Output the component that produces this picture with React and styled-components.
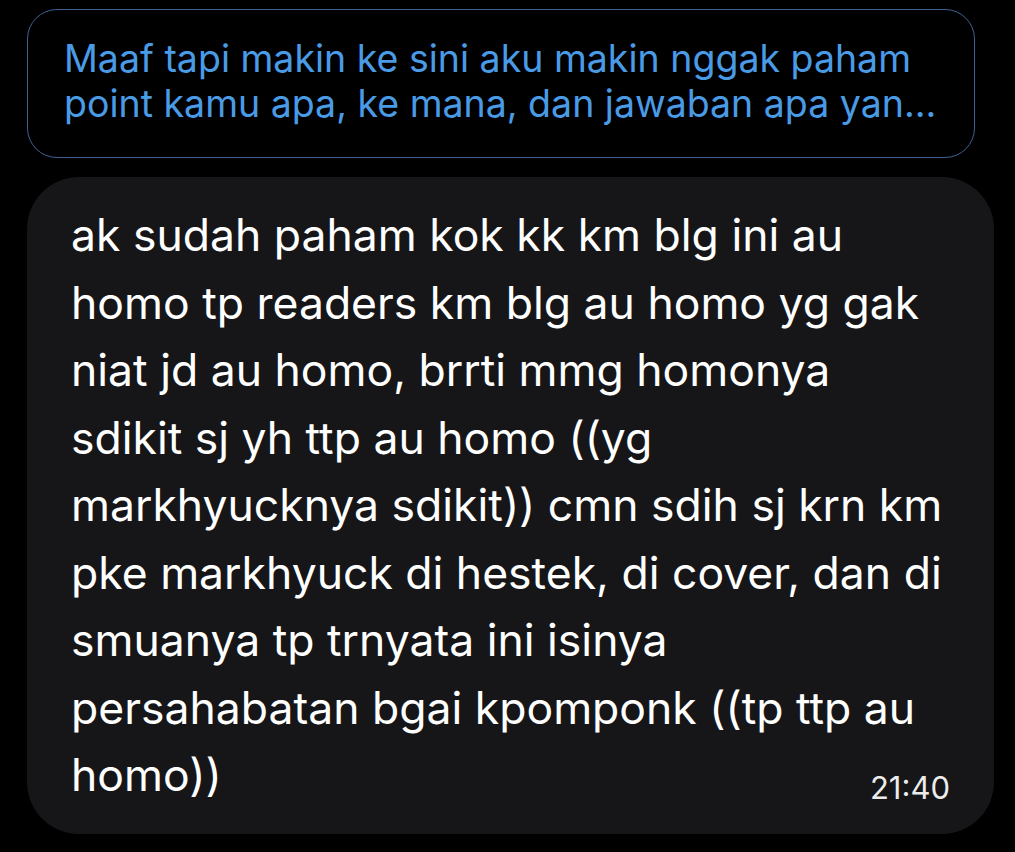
import React from "react";
import styled, { createGlobalStyle } from "styled-components";

const Global = createGlobalStyle`
  html, body { margin: 0; padding: 0; background: #000; }
  body { width: 1015px; height: 852px; overflow: hidden; font-family: Inter, "Noto Sans", sans-serif; }
`;

const Page = styled.div`
  display: flex;
  flex-direction: column;
  align-items: flex-start;
  gap: 19px;
  padding: 9px 21px 0 27px;
  background: #000;
  height: 852px;
  box-sizing: border-box;
`;

const Quote = styled.div`
  box-sizing: border-box;
  width: 948px;
  height: 149px;
  border: 1.5px solid #3f6190;
  border-radius: 30px;
  padding: 26px 0 0 36px;
  color: #4a9be6;
`;

const QuoteLine = styled.div`
  font-size: 37.5px;
  line-height: 45px;
  white-space: nowrap;
`;

const Bubble = styled.div`
  box-sizing: border-box;
  width: 967px;
  height: 657px;
  background: #161618;
  border-radius: 52px;
  padding: 25px 44px 0 44px;
  display: flex;
  flex-direction: column;
  color: #fff;
`;

const Line = styled.div`
  font-size: 44.5px;
  line-height: 67.5px;
  white-space: nowrap;
`;

const LastRow = styled.div`
  display: flex;
  justify-content: space-between;
  align-items: flex-start;
`;

const Time = styled.span`
  font-size: 31px;
  color: #ececec;
  margin-top: 27px;
  margin-right: 0px;
`;

const quoteLines = [
  "Maaf tapi makin ke sini aku makin nggak paham",
  "point kamu apa, ke mana, dan jawaban apa yan...",
];

const lines = [
  "ak sudah paham kok kk km blg ini au",
  "homo tp readers km blg au homo yg gak",
  "niat jd au homo, brrti mmg homonya",
  "sdikit sj yh ttp au homo ((yg",
  "markhyucknya sdikit)) cmn sdih sj krn km",
  "pke markhyuck di hestek, di cover, dan di",
  "smuanya tp trnyata ini isinya",
  "persahabatan bgai kpomponk ((tp ttp au",
];

export default function App() {
  return (
    <>
      <Global />
      <Page>
        <Quote>
          {quoteLines.map((l) => (
            <QuoteLine key={l}>{l}</QuoteLine>
          ))}
        </Quote>
        <Bubble>
          {lines.map((l) => (
            <Line key={l}>{l}</Line>
          ))}
          <LastRow>
            <Line>homo))</Line>
            <Time>21:40</Time>
          </LastRow>
        </Bubble>
      </Page>
    </>
  );
}
